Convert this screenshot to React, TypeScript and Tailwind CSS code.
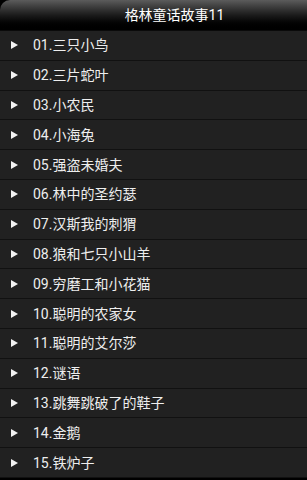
import React from 'react';

const stories = [
  '01.三只小鸟',
  '02.三片蛇叶',
  '03.小农民',
  '04.小海兔',
  '05.强盗未婚夫',
  '06.林中的圣约瑟',
  '07.汉斯我的刺猬',
  '08.狼和七只小山羊',
  '09.穷磨工和小花猫',
  '10.聪明的农家女',
  '11.聪明的艾尔莎',
  '12.谜语',
  '13.跳舞跳破了的鞋子',
  '14.金鹅',
  '15.铁炉子',
];

const font = { fontFamily: '"Roboto", "Noto Sans CJK SC", sans-serif' };

export default function App() {
  return (
    <div className="w-[307px] h-[480px] overflow-hidden bg-black" style={font}>
      <div className="h-[31px] rounded-tl-[10px] bg-gradient-to-b from-[#5c5c5c] via-[#1c1c1c] to-black flex items-center justify-center pl-[42px] border-b border-[#0a0a0a]">
        <span className="text-[14px] text-white leading-none">格林童话故事11</span>
      </div>
      <ul className="bg-[#212121]">
        {stories.map((s) => (
          <li
            key={s}
            className="h-[29.8px] flex items-center border-b border-[#111111]"
          >
            <svg width="7" height="8" viewBox="0 0 7 8" className="ml-[11px] mr-[15px]">
              <path d="M0 0 L7 4 L0 8 Z" fill="#f2f2f2" />
            </svg>
            <span className="text-[14px] text-[#eeeeee] leading-none">{s}</span>
          </li>
        ))}
      </ul>
    </div>
  );
}
